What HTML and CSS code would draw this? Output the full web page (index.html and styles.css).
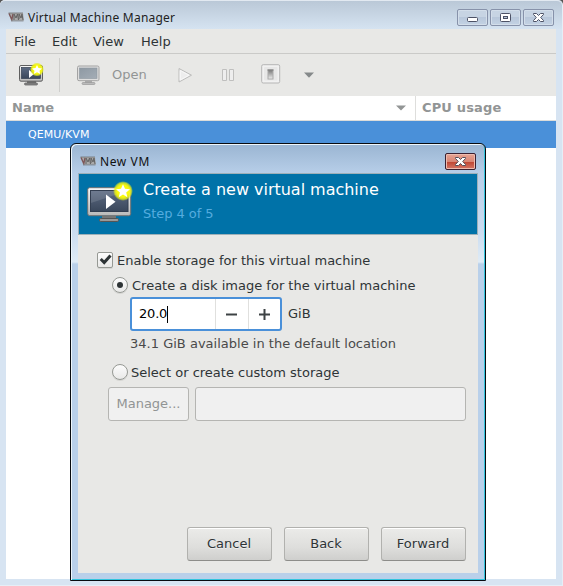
FILE: index.html
```html
<!DOCTYPE html>
<html lang="en">
<head>
<meta charset="utf-8">
<title>Virtual Machine Manager</title>
<link rel="stylesheet" href="styles.css">
</head>
<body>
<svg class="defs" width="0" height="0" aria-hidden="true">
  <defs>
    <linearGradient id="bezel" x1="0" y1="0" x2="0" y2="1"><stop offset="0" stop-color="#fafafa"/><stop offset="1" stop-color="#b9b9b9"/></linearGradient>
    <linearGradient id="screen" x1="0" y1="0" x2="0" y2="1"><stop offset="0" stop-color="#5c6a82"/><stop offset="1" stop-color="#3a475b"/></linearGradient>
    <linearGradient id="dim" x1="0" y1="0" x2="1" y2="1"><stop offset="0" stop-color="#8e99a3"/><stop offset="1" stop-color="#a4adb6"/></linearGradient>
    <radialGradient id="glow"><stop offset="0.6" stop-color="#f8f90c"/><stop offset="0.82" stop-color="#eaf018" stop-opacity="0.8"/><stop offset="1" stop-color="#d8e520" stop-opacity="0"/></radialGradient>
    <linearGradient id="slot" x1="0" y1="0" x2="0" y2="1"><stop offset="0" stop-color="#777"/><stop offset="1" stop-color="#eee"/></linearGradient>
    <symbol id="vmm" viewBox="0 0 16 10">
      <path d="M0.500 1H15L16 8.500H3z" fill="#a9a9a9"/>
      <path d="M1 1.500L3.800 7.500L5 2" fill="none" stroke="#7d5558" stroke-width="1.300"/>
      <path d="M6 8V2L8 6L9.500 2L10.500 8M11 7V2L13 6L14 2L15 8" fill="none" stroke="#626262" stroke-width="1"/>
      <path d="M3 8.900H15.500M0.500 1H15" stroke="#666" stroke-width="0.700"/>
    </symbol>
    <symbol id="newvm" viewBox="0 0 46 42">
      <path d="M15 35H29V39H15z" fill="#777"/>
      <rect x="12.500" y="37.500" width="19" height="3" rx="1.200" fill="#999" stroke="#555"/>
      <rect x="0.700" y="6.700" width="43" height="28" rx="2" fill="url(#bezel)" stroke="#707070"/>
      <rect x="3.500" y="9.500" width="37.500" height="21" fill="url(#screen)" stroke="#333e50"/>
      <path d="M4 10H40L4 22z" fill="#fff" opacity="0.12"/>
      <path d="M19 13.500V28L28.500 20.700z" fill="#fff"/>
      <circle cx="36" cy="10" r="10" fill="url(#glow)"/>
      <path d="M36 3.300L38 7.800L43 8.200L39.200 11.400L40.400 16.200L36 13.600L31.700 16.200L32.900 11.400L29 8.200L34 7.800z" fill="#fff"/>
    </symbol>
    <symbol id="newvm-small" viewBox="0 0 25 23">
      <path d="M8 18H17V21H8z" fill="#777"/>
      <rect x="5.500" y="20" width="13" height="2" rx="1" fill="#8c8c8c" stroke="#555" stroke-width=".7"/>
      <rect x=".5" y="2.500" width="23" height="15.700" rx="1.500" fill="url(#bezel)" stroke="#5f5f5f"/>
      <rect x="2.500" y="4.500" width="19" height="11" fill="url(#screen)" stroke="#333e50" stroke-width=".7"/>
      <path d="M10 7V15L15 11z" fill="#fff"/>
      <circle cx="18" cy="6.500" r="7" fill="url(#glow)"/>
      <path d="M18 2L19.500 5L23 5.400L20.500 7.700L21.200 11L18 9.300L14.800 11L15.500 7.700L13 5.400L16.500 5z" fill="#fff"/>
    </symbol>
  </defs>
</svg>
<div class="window">
  <header class="titlebar">
    <svg class="app-icon" width="16" height="10"><use href="#vmm"/></svg>
    <span class="title main-title">Virtual Machine Manager</span>
    <div class="controls">
      <span class="control"><svg width="29" height="15"><rect x="9.500" y="7.500" width="10" height="4" rx="1" fill="#fff" stroke="#4d5266"/></svg></span>
      <span class="control"><svg width="29" height="15"><rect x="9.500" y="3.500" width="10" height="8" rx="1" fill="#fff" stroke="#4d5266"/><rect x="12.500" y="6.500" width="4" height="2" fill="#b7c4d7" stroke="#4d5266"/></svg></span>
      <span class="control"><svg width="29" height="15"><path d="M9.500 3.500H12.500L14.500 5.500L16.500 3.500H19.500V4.500L16.700 7.500L19.500 10.500V11.500H16.500L14.500 9.500L12.500 11.500H9.500V10.500L12.300 7.500L9.500 4.500z" fill="#fff" stroke="#4d5266"/></svg></span>
    </div>
  </header>
  <main class="client">
    <nav class="menu"><span class="m-file">File</span><span class="m-edit">Edit</span><span class="m-view">View</span><span>Help</span></nav>
    <div class="toolbar">
      <svg class="t-new" width="25" height="23"><use href="#newvm-small"/></svg>
      <span class="divider"></span>
      <svg class="t-open" width="23" height="21" viewBox="0 0 23 21">
        <path d="M8 15H15V18H8z" fill="#aaa"/><rect x="5" y="17.500" width="13" height="2" rx="1" fill="#bbb" stroke="#999" stroke-width="0.700"/>
        <rect x="0.500" y="1" width="21.500" height="14.700" rx="1.500" fill="#dedede" stroke="#a3a3a3"/><rect x="2.500" y="3" width="17.500" height="10.500" fill="url(#dim)" stroke="#8d969f" stroke-width="0.600"/>
      </svg>
      <span class="open-label">Open</span>
      <svg class="t-play" width="15" height="17" viewBox="0 0 15 17"><path d="M1 1.500V15L13.500 8.200z" fill="#ededed" stroke="#bcbcbb"/><path d="M2.200 3.500V13L11 8.200z" fill="none" stroke="#f8f8f8"/></svg>
      <svg class="t-pause" width="13" height="13" viewBox="0 0 13 13"><path d="M.5.500H4.500V11.500H.5zM7.500.500H11.500V11.500H7.500z" fill="#eee" stroke="#bfbfbe"/></svg>
      <svg class="t-power" width="20" height="20" viewBox="0 0 20 20"><rect x=".7" y=".7" width="18" height="18.300" rx="1.500" fill="#f1f1f1" stroke="#b5b5b5"/><rect x="3" y="3" width="13.500" height="13.500" rx="1" fill="#e7e7e7"/><rect x="7" y="6" width="5" height="9" fill="url(#slot)" stroke="#aaa"/><path d="M6.500 6H12.500" stroke="#747474"/></svg>
      <svg width="10" height="6" viewBox="0 0 10 6"><path d="M0 .5H10L5 5.700z" fill="#85898a"/></svg>
    </div>
    <div class="columns">
      <span class="name-column">Name<svg width="10" height="6" viewBox="0 0 10 6"><path d="M0 .5H10L5 5.500z" fill="#929595"/></svg></span>
      <span class="cpu-column">CPU usage</span>
    </div>
    <div class="connection">QEMU/KVM</div>
    <div class="list"></div>
  </main>
</div>
<section class="dialog">
  <header class="dialog-title">
    <svg class="app-icon" width="16" height="10"><use href="#vmm"/></svg>
    <span class="title">New VM</span>
    <span class="close"><svg width="29" height="15"><path d="M9.500 3.500H12.500L14.500 5.500L16.500 3.500H19.500V4.500L16.700 7.500L19.500 10.500V11.500H16.500L14.500 9.500L12.500 11.500H9.500V10.500L12.300 7.500L9.500 4.500z" fill="#fff" stroke="#56505b"/></svg></span>
  </header>
  <div class="dialog-body">
    <div class="banner">
      <svg class="banner-icon" width="46" height="42"><use href="#newvm"/></svg>
      <div class="heading"><h1>Create a new virtual machine</h1><p>Step 4 of 5</p></div>
    </div>
    <div class="form">
      <div class="option enable"><span class="check"><svg width="14" height="14" viewBox="0 0 14 14"><path d="M2.700 6L6.200 9.500L12.500 2.500" fill="none" stroke="#2e3436" stroke-width="3"/></svg></span><span class="label">Enable storage for this virtual machine</span></div>
      <div class="option create"><span class="radio selected"></span><span class="label">Create a disk image for the virtual machine</span></div>
      <div class="size-row">
        <div class="spinner"><span class="value">20.0<i class="caret"></i></span><span class="step"><svg width="11" height="11"><path d="M0 5.500H11" stroke="#3d4244" stroke-width="2"/></svg></span><span class="step"><svg width="11" height="11"><path d="M0 5.500H11M5.500 0V11" stroke="#3d4244" stroke-width="2"/></svg></span></div>
        <span>GiB</span>
      </div>
      <p class="available">34.1 GiB available in the default location</p>
      <div class="option custom"><span class="radio"></span><span>Select or create custom storage</span></div>
      <div class="storage"><span class="manage">Manage...</span><span class="path"></span></div>
      <footer class="actions"><span class="button">Cancel</span><span class="button">Back</span><span class="button">Forward</span></footer>
    </div>
  </div>
</section>
</body>
</html>
```
FILE: styles.css
```css
* { box-sizing: border-box; }
body { margin: 0; width: 563px; height: 586px; overflow: hidden; background: #555; color: #2e3436; font: 13px/16px "DejaVu Sans", sans-serif; }
svg { display: block; flex: none; }
span, p, h1 { white-space: nowrap; }
.defs { position: absolute; }
.window { height: 586px; display: flex; flex-direction: column; padding: 0 6px 6px; background: #d7e4f2; border: solid #e6eef6; border-width: 0 1px 1px 0; border-radius: 5px 5px 0 0; }
.titlebar { flex: none; height: 29px; margin: 0 -6px; padding: 0 8px 0 8px; display: flex; align-items: center; border-top: 1px solid #e2e9f1; border-radius: 5px 5px 0 0; background: linear-gradient(#bac8d7, #d5e3f1); }
.app-icon { margin: 4px 4px 0 0; }
.title { color: #222; font: 12px/17px "Noto Sans", sans-serif; }
.main-title { margin-top: 5px; letter-spacing: .23px; }
.controls { display: flex; gap: 2px; margin-left: auto; margin-top: 5px; }
.control { width: 31px; height: 17px; border: 1px solid #8792aa; border-radius: 2px; background: linear-gradient(#c7d4e3 50%, #b8c7da 50%, #c3d2e4); box-shadow: inset 0 0 0 1px #d3deea; }
.client { flex: 1; display: flex; flex-direction: column; background: #fff; }
.menu { height: 25px; flex: none; display: flex; padding: 5px 8px 3px; background: #e8e8e6; border-bottom: 1px solid #cacac8; }
.m-file { width: 38px; }
.m-edit { width: 41px; }
.m-view { width: 48px; }
.toolbar { height: 42px; flex: none; display: flex; align-items: center; padding-left: 13px; background: #e8e8e6; }
.t-new { margin-top: -1px; }
.divider { width: 1px; height: 34px; margin: 0 17px 0 15px; background: #cececc; }
.open-label { color: #929595; margin: 0 31px 0 12px; }
.t-play { margin-right: 29px; }
.t-pause { margin-right: 26px; }
.t-power { margin: -2px 23px 0 0; }
.columns { height: 25px; flex: none; display: flex; border-bottom: 1px solid #dcdcda; color: #929595; font-weight: 700; }
.name-column { width: 410px; display: flex; justify-content: space-between; align-items: center; padding: 0 9px 0 6px; border-right: 1px solid #dededc; }
.cpu-column { padding: 4px 6px; letter-spacing: .15px; }
.connection { height: 27px; flex: none; padding: 6px 22px; background: #4a90d9; color: #fff; font-size: 11px; letter-spacing: .05px; }
.list { flex: 1; background: #fff; }
.dialog { position: absolute; left: 70px; top: 143px; width: 416px; height: 438px; display: flex; flex-direction: column; padding: 0 7px 7px; border: 1px solid #080b10; border-radius: 6px 6px 0 0; background: linear-gradient(#9ab5d2, #b8cfe9 30px, #cbdcf0 88px, #dfebf6 118px, #b9d0ea 120px); box-shadow: inset 1px 1px #edf6fc, inset -1px -1px #32c4dd; }
.dialog-title { height: 29px; flex: none; display: flex; align-items: center; padding: 0 1px 0 2px; }
.dialog-title .app-icon { margin: 5px 4px 0 0; }
.dialog-title .title { margin-top: 5px; color: #111; letter-spacing: .6px; }
.close { width: 31px; height: 17px; margin: 5px 1px 0 auto; border: 1px solid #3b2030; border-radius: 2px; background: linear-gradient(#e6a494, #d98574 50%, #bd4330 50%, #d57565); box-shadow: inset 0 0 0 1px #eebbae; }
.dialog-body { flex: 1; display: flex; flex-direction: column; background: #e8e8e6; }
.banner { height: 62px; flex: none; display: flex; padding: 8px 8px 0; background: #0072a8; border: 1px solid #9eb0b8; }
.banner-icon { margin-top: -1px; }
.heading { margin-left: 10px; }
h1 { margin: -1px 0 7px; color: #fff; font-size: 16px; font-weight: 400; line-height: 18px; letter-spacing: -.02px; }
.heading p { margin: 0; color: #55acdf; letter-spacing: -.05px; }
.form { flex: 1; display: flex; flex-direction: column; padding: 17px 12px 12px 19px; }
.option { display: flex; align-items: center; gap: 4px; height: 16px; }
.label { padding-top: 2px; }
.check, .radio { width: 16px; height: 16px; border: 1px solid #969994; background: linear-gradient(#fcfcfc, #e9e9e8); box-shadow: 0 1px #d4d4d2; }
.check { border-radius: 2px; }
.radio { display: flex; align-items: center; justify-content: center; border-radius: 50%; }
.selected::after { content: ""; width: 6px; height: 6px; border-radius: 50%; background: #2e3436; }
.create { margin: 9px 0 0 15px; }
.size-row { display: flex; align-items: center; gap: 6px; margin: 4px 0 0 33px; }
.spinner { width: 152px; height: 34px; display: flex; border: 2px solid #4a90d9; border-radius: 3px; background: #fff; }
.value { flex: 1; display: flex; align-items: center; padding-left: 7px; color: #000; letter-spacing: -.2px; }
.caret { width: 1px; height: 17px; background: #000; }
.step { width: 33px; display: flex; align-items: center; justify-content: center; border-left: 1px solid #e0e0de; }
.step:last-child { width: 32.500px; }
.available { margin: 5px 0 0 33px; color: #4a4a4a; letter-spacing: .01px; }
.custom { margin: 12px 0 0 15px; gap: 3px; }
.custom span:last-child { padding-top: 1px; }
.storage { display: flex; gap: 6px; margin: 7px 0 0 11px; }
.manage, .path { height: 34px; border: 1px solid #b5b5b2; border-radius: 3px; background: #f0f0f0; }
.manage { width: 81px; padding-top: 8px; text-align: center; color: #919494; }
.path { flex: 1; }
.actions { display: flex; gap: 12px; justify-content: flex-end; margin-top: auto; }
.button { width: 85px; height: 34px; padding: 8px 1px 0 0; border: 1px solid #b1b1ae; border-bottom-color: #8d8d8a; border-radius: 3px; text-align: center; background: linear-gradient(#ebebe9, #dededc 60%, #cfcfcd); box-shadow: inset 0 1px #fff; text-shadow: 0 1px #eee; }
```
